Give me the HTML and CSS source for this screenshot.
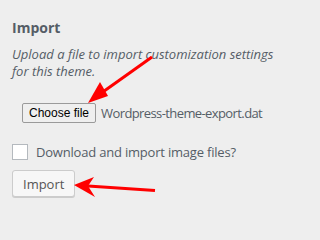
FILE: index.html
```html
<!DOCTYPE html>
<html>
<head>
<meta charset="utf-8">
<link rel="stylesheet" href="styles.css">
</head>
<body>
<div class="panel">
  <h3 class="title">Import</h3>
  <p class="desc">Upload a file to import customization settings for this theme.</p>
  <div class="file-row">
    <button class="file-btn">Choose file</button>
    <span class="file-name">Wordpress-theme-export.dat</span>
  </div>
  <label class="check-row">
    <span class="checkbox"></span>
    <span class="check-label">Download and import image files?</span>
  </label>
  <button class="import-btn">Import</button>
  <svg class="annot" width="298" height="217" viewBox="0 0 298 217">
    <line x1="152" y1="57" x2="100" y2="94" stroke="#ff0000" stroke-width="3"/>
    <polygon points="88,103 100,82 108,96" fill="#ff0000"/>
    <line x1="88" y1="186" x2="155" y2="190.5" stroke="#ff0000" stroke-width="3"/>
    <polygon points="74,185 94,177 88,186 95,197" fill="#ff0000"/>
  </svg>
</div>
</body>
</html>
```

FILE: styles.css
```css
html, body {
  margin: 0;
  background: #eeeeee;
}
.panel {
  position: relative;
  box-sizing: border-box;
  width: 298px;
  height: 217px;
  padding: 18px 12px 0;
  font-family: "Open Sans", "Noto Sans", sans-serif;
  color: #555d66;
  overflow: hidden;
}
.title {
  margin: 0;
  font-size: 14px;
  line-height: 20px;
  font-weight: 700;
}
.desc {
  margin: 8px 0 0;
  width: 280px;
  font-size: 13px;
  line-height: 17px;
  font-style: italic;
}
.file-row {
  display: flex;
  align-items: center;
  margin-top: 23px;
  padding-left: 10px;
  height: 20px;
}
.file-btn {
  box-sizing: border-box;
  height: 20px;
  padding: 0 6px;
  margin: 0;
  font-family: "Liberation Sans", Arial, sans-serif;
  font-size: 12px;
  color: #000;
  background: #efefef;
  border: 1px solid #9a9a9a;
  border-radius: 2px;
}
.file-name {
  margin-left: 5px;
  font-size: 13px;
  letter-spacing: -0.6px;
  color: #555d66;
}
.check-row {
  display: flex;
  align-items: center;
  margin-top: 21px;
  height: 16px;
}
.checkbox {
  box-sizing: border-box;
  width: 16px;
  height: 16px;
  background: #fff;
  border: 1px solid #b4b9be;
}
.check-label {
  margin-left: 8px;
  font-size: 13px;
  letter-spacing: -0.2px;
}
.import-btn {
  display: block;
  box-sizing: border-box;
  margin-top: 10px;
  height: 27px;
  padding: 0 10px;
  font-family: "Open Sans", "Noto Sans", sans-serif;
  font-size: 13px;
  color: #555;
  background: #f7f7f7;
  border: 1px solid #cccccc;
  border-radius: 3px;
  box-shadow: 0 1px 0 #cccccc;
}
.annot {
  position: absolute;
  left: 0;
  top: 0;
  pointer-events: none;
}
```
